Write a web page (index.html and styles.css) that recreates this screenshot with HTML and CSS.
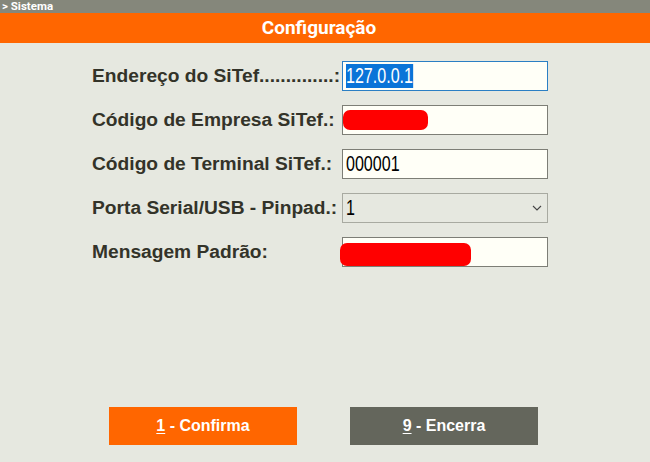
FILE: index.html
```html
<!DOCTYPE html>
<html lang="pt-BR">
<head>
<meta charset="utf-8">
<title>Configuração</title>
<link rel="stylesheet" href="styles.css">
</head>
<body>
<div class="topbar">&gt; Sistema</div>
<div class="header">Configuração</div>
<form class="form">
  <div class="label">Endereço do SiTef..............:</div>
  <div class="field focused"><span class="val sel">127.0.0.1</span></div>

  <div class="label">Código de Empresa SiTef.:</div>
  <div class="field"><span class="redact r1"></span></div>

  <div class="label">Código de Terminal SiTef.:</div>
  <div class="field"><span class="val">000001</span></div>

  <div class="label">Porta Serial/USB - Pinpad.:</div>
  <div class="field select"><span class="val">1</span>
    <svg class="chev" width="10" height="6" viewBox="0 0 10 6"><path d="M1 1 L5 5 L9 1" fill="none" stroke="#444" stroke-width="1.1"/></svg>
  </div>

  <div class="label">Mensagem Padrão:</div>
  <div class="field"><span class="redact r2"></span></div>
</form>
<div class="actions">
  <div class="btn confirm"><span><u>1</u> - Confirma</span></div>
  <div class="btn close"><span><u>9</u> - Encerra</span></div>
</div>
</body>
</html>
```

FILE: styles.css
```css
html, body {
  margin: 0;
  padding: 0;
  background: #e6e8e0;
  width: 650px;
  height: 462px;
  overflow: hidden;
}
.topbar {
  height: 13px;
  background: #85877b;
  color: #fff;
  font-family: Roboto, "Liberation Sans", sans-serif;
  font-weight: bold;
  font-size: 11.5px;
  line-height: 12px;
  padding-left: 2px;
}
.header {
  height: 30px;
  background: #ff6600;
  color: #fff;
  font-family: Roboto, "Liberation Sans", sans-serif;
  font-weight: bold;
  font-size: 19px;
  line-height: 30px;
  text-align: center;
  padding-right: 12px;
}
.form {
  display: grid;
  grid-template-columns: 250px 206px;
  grid-auto-rows: 30px;
  row-gap: 14px;
  margin: 18px 0 0 92px;
}
.label {
  font-family: "Liberation Sans", Arial, sans-serif;
  font-weight: bold;
  font-size: 19.2px;
  color: #333329;
  display: flex;
  align-items: center;
  white-space: nowrap;
}
.field {
  position: relative;
  box-sizing: border-box;
  height: 30px;
  border: 1px solid #7d7e76;
  background: #fffff7;
  font-family: "Liberation Sans", sans-serif;
  font-size: 22px;
  color: #000;
  display: flex;
  align-items: center;
  padding-left: 3px;
}
.val {
  display: inline-block;
  transform: scaleX(0.73);
  transform-origin: left center;
  line-height: 24px;
}
.field.focused {
  border-color: #2b7fc4;
}
.sel {
  background: #0a74d8;
  color: #fff;
}
.field.select {
  background: #e6e8e0;
  border-color: #a8aaa1;
  justify-content: space-between;
  padding-right: 5px;
}
.redact {
  position: absolute;
  background: #ff0000;
  border-radius: 7px;
}
.r1 { left: 0; top: 4px; width: 85px; height: 20px; }
.r2 { left: -3px; top: 5px; width: 131px; height: 23px; }
.actions {
  display: flex;
  justify-content: center;
  gap: 53px;
  margin-top: 140px;
  padding-right: 3px;
}
.btn {
  width: 188px;
  height: 38px;
  display: flex;
  align-items: center;
  justify-content: center;
  color: #fff;
  font-family: "Liberation Sans", Arial, sans-serif;
  font-weight: bold;
  font-size: 16px;
}
.btn u { text-underline-offset: 2px; }
.confirm { background: #ff6600; }
.close { background: #64665c; }
```
